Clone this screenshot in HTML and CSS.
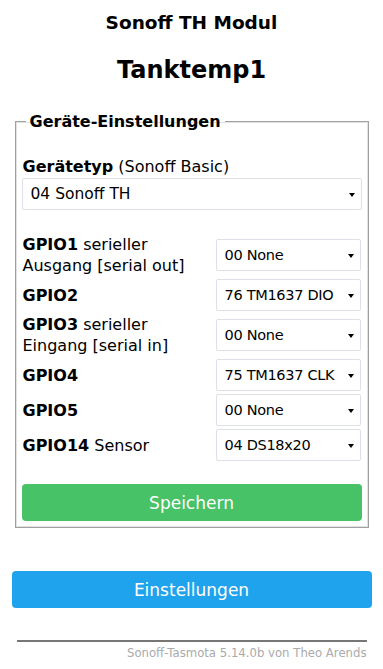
FILE: index.html
```html
<!DOCTYPE html>
<html lang="de">
<head>
  <meta charset="UTF-8" />
  <meta name="viewport" content="width=device-width, initial-scale=1" />
  <title>Sonoff TH Modul</title>
  <link rel="stylesheet" href="styles.css">
</head>
<body>

<div class="page">
  <h3>Sonoff TH Modul</h3>
  <h2>Tanktemp1</h2>

  <fieldset class="box">
    <legend>Geräte-Einstellungen</legend>

    <p class="type-label"><b>Gerätetyp</b> (Sonoff Basic)</p>
    <div class="select wide">04 Sonoff TH</div>

    <!-- GPIO Zuordnung -->
    <div class="gpio">
      <div class="gpio-label"><b>GPIO1</b> serieller<br>Ausgang [serial out]</div>
      <div class="select">00 None</div>

      <div class="gpio-label"><b>GPIO2</b></div>
      <div class="select">76 TM1637 DIO</div>

      <div class="gpio-label"><b>GPIO3</b> serieller<br>Eingang [serial in]</div>
      <div class="select">00 None</div>

      <div class="gpio-label"><b>GPIO4</b></div>
      <div class="select">75 TM1637 CLK</div>

      <div class="gpio-label"><b>GPIO5</b></div>
      <div class="select">00 None</div>

      <div class="gpio-label"><b>GPIO14</b> Sensor</div>
      <div class="select">04 DS18x20</div>
    </div>

    <button class="btn save">Speichern</button>
  </fieldset>

  <button class="btn">Einstellungen</button>

  <hr />
  <p class="footer">Sonoff-Tasmota 5.14.0b von Theo Arends</p>
</div>

</body>
</html>
```

FILE: styles.css
```css
* {
  box-sizing: border-box;
  margin: 0;
  padding: 0;
}

body {
  font-family: 'DejaVu Sans', Verdana, sans-serif;
  background: #fff;
  color: #000;
}

.page {
  width: 360px;
  margin: 0 auto;
  padding-top: 12px;
}

h3 {
  text-align: center;
  font-size: 18.5px;
  line-height: 22px;
  font-weight: bold;
}

h2 {
  text-align: center;
  font-size: 24px;
  line-height: 28px;
  margin-top: 22px;
}

.box {
  margin: 28px 3px 0 3px;
  border: 1px solid #a0a0a0;
  box-shadow: inset 0 0 0 1px #e2e2e2;
  padding: 12px 6px 6px 6px;
}

.box legend {
  font-weight: bold;
  font-size: 16px;
  padding: 0 4px;
  margin-left: 4px;
}

.type-label {
  font-size: 16px;
  line-height: 20px;
  margin-top: 14px;
  padding-left: 1px;
}

.select {
  position: relative;
  height: 32px;
  border: 1px solid #dde0e6;
  border-radius: 2px;
  background: #fff;
  font-size: 15.5px;
  line-height: 30px;
  padding-left: 8px;
  white-space: nowrap;
}

.select::after {
  content: "";
  position: absolute;
  right: 6px;
  top: 14px;
  border-left: 3.5px solid transparent;
  border-right: 3.5px solid transparent;
  border-top: 4px solid #000;
}

.wide {
  margin-top: 1px;
}

.gpio {
  display: grid;
  grid-template-columns: 1fr 146px;
  column-gap: 6px;
  row-gap: 3px;
  align-items: center;
  margin-top: 24px;
  padding-left: 1px;
}

.gpio .select {
  margin-right: 1px;
  font-size: 14.5px;
  letter-spacing: -0.3px;
}

.gpio-label {
  font-size: 16px;
  line-height: 21px;
  white-space: nowrap;
}

.btn {
  display: block;
  width: 100%;
  height: 37px;
  border: none;
  border-radius: 4px;
  background: #1fa3ec;
  color: #fff;
  font-family: 'DejaVu Sans', Verdana, sans-serif;
  font-size: 17px;
  margin-top: 43px;
}

.save {
  background: #47c266;
  margin-top: 23px;
}

hr {
  margin: 32px 5px 0 5px;
  border: none;
  border-top: 2px solid #777;
}

.footer {
  text-align: right;
  font-size: 11.7px;
  color: #aaa;
  margin-top: 4px;
  padding-right: 5px;
}
```
